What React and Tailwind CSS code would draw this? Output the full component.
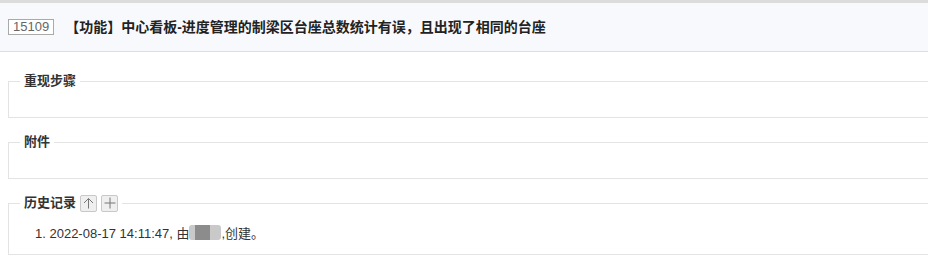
import React from "react";

const font = "font-['Liberation_Sans','Noto_Sans_CJK_SC',sans-serif]";

function Section({ title, extra, children, className = "" }) {
  return (
    <fieldset className={`border border-r-0 border-[#e3e3e3] pl-[11px] ${className}`}>
      <legend className="flex items-center px-1 text-[13px] leading-[18px] font-bold text-[#333]">
        {title}
        {extra}
      </legend>
      {children}
    </fieldset>
  );
}

function IconButton({ children }) {
  return (
    <span className="ml-[4px] inline-flex h-[17px] w-[17px] items-center justify-center rounded-[2px] border border-[#c8c8c8] bg-[#efefef] text-[#777]">
      {children}
    </span>
  );
}

export default function App() {
  return (
    <div className={`${font} bg-white text-[#333]`}>
      <div className="h-[3px] bg-[#dcdcdc]" />
      <div className="flex h-[49px] items-center border-b border-[#dddddd] bg-[#f8f9fd] px-2">
        <span className="h-[16px] border border-[#aaaaaa] bg-white px-[4px] text-[13px] leading-[14px] text-[#666]">
          15109
        </span>
        <h1 className="ml-[11px] text-[14px] font-bold leading-[20px] text-[#222]">
          【功能】中心看板-进度管理的制梁区台座总数统计有误，且出现了相同的台座
        </h1>
      </div>

      <div className="pl-2">
        <Section title="重现步骤" className="mt-[20px]">
          <div className="h-[27px]" />
        </Section>
        <Section title="附件" className="mt-[15px]">
          <div className="h-[27px]" />
        </Section>
        <Section
          title="历史记录"
          className="mt-[15px]"
          extra={
            <span className="flex">
              <IconButton>
                <svg width="11" height="12" viewBox="0 0 11 12" fill="none" stroke="currentColor" strokeWidth="1">
                  <path d="M5.5 1.5V11.5M1 6L5.5 1.5L10 6" />
                </svg>
              </IconButton>
              <IconButton>
                <svg width="12" height="12" viewBox="0 0 12 12" fill="none" stroke="currentColor" strokeWidth="1">
                  <path d="M6 0.5V11.5M0.5 6H11.5" />
                </svg>
              </IconButton>
            </span>
          }
        >
          <div className="pl-[15px] pt-[11px] pb-[10px] text-[13px] leading-[20px] text-[#333]">
            1. 2022-08-17 14:11:47, 由
            <span className="inline-flex h-[15px] translate-y-[2px] align-baseline">
              <span className="w-[6px] rounded-l-[3px] bg-[#c9c9c9]" />
              <span className="w-[15px] bg-[#8c8c8c]" />
              <span className="w-[11px] rounded-r-[3px] bg-[#c9c9c9]" />
            </span>
            ,创建。
          </div>
        </Section>
      </div>
    </div>
  );
}
